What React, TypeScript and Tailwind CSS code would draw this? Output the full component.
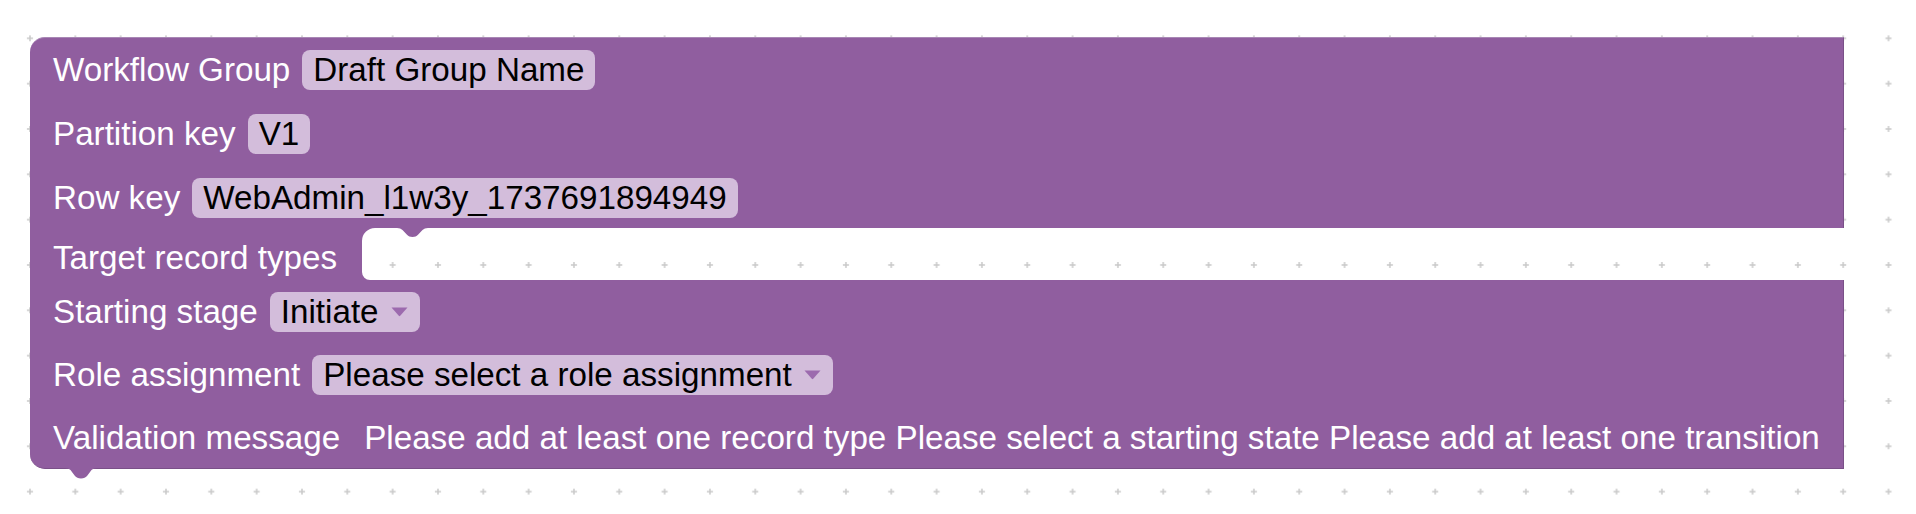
import React from "react";

const PURPLE = "#905e9f";

function Pill({ children, dropdown }: { children: React.ReactNode; dropdown?: boolean }) {
  return (
    <span className="ml-[12px] flex h-[40px] items-center rounded-[8px] bg-[#d3bddb] pl-[11px] pr-[11px] text-black">
      {children}
      {dropdown && (
        <svg width="17" height="10" viewBox="0 0 17 10" className="ml-[12px] mr-[1px]">
          <path d="M0.5 0.5 H16.5 L9.2 8.8 Q8.5 9.5 7.8 8.8 Z" fill="#9c6aae" />
        </svg>
      )}
    </span>
  );
}

function Row({ label, children }: { label: string; children?: React.ReactNode }) {
  return (
    <div className="flex h-[40px] items-center whitespace-nowrap">
      <span className="text-white">{label}</span>
      {children}
    </div>
  );
}

export default function App() {
  return (
    <div className="relative h-[514px] w-full overflow-hidden bg-white font-['Liberation_Sans',Arial,sans-serif] text-[33.2px] leading-none">
      {/* workspace grid */}
      <svg className="absolute inset-0 h-full w-full" aria-hidden>
        <defs>
          <pattern id="grid" x="7.33" y="15.66" width="45.33" height="45.33" patternUnits="userSpaceOnUse">
            <path d="M19.6 22.67 H25.7 M22.67 19.6 V25.7" stroke="#c9c9c9" strokeWidth="1.5" />
          </pattern>
        </defs>
        <rect width="100%" height="100%" fill="url(#grid)" />
      </svg>

      <div className="relative pl-[30px] pt-[37px]">
        <div className="w-[1814px]">
          {/* top section */}
          <div className="flex flex-col gap-[24px] rounded-tl-[15px] border-t border-r border-[#a887b4] border-r-[#7a5088] bg-[#905e9f] pb-[10px] pl-[23px] pt-[12px]">
            <Row label="Workflow Group">
              <Pill>Draft Group Name</Pill>
            </Row>
            <Row label="Partition key">
              <Pill>V1</Pill>
            </Row>
            <Row label="Row key">
              <Pill>WebAdmin_l1w3y_1737691894949</Pill>
            </Row>
          </div>

          {/* statement input */}
          <div className="flex h-[52px]">
            <div className="w-[332px] shrink-0 bg-[#905e9f] pl-[23px] pt-[10px]">
              <Row label="Target record types" />
            </div>
            <div className="relative flex-1">
              <svg className="absolute left-0 top-0" width="70" height="14" viewBox="0 0 70 14">
                <path d="M0 0 H13 A13 13 0 0 0 0 13 Z" fill={PURPLE} />
                <path
                  d="M35 0 C37.5 0 39 0.8 40.5 2 L45 6.8 C46.5 8.2 48 9 50.5 9 C53 9 54.5 8.2 56 6.8 L60.5 2 C62 0.8 63.5 0 66 0 Z"
                  fill={PURPLE}
                />
              </svg>
              <svg className="absolute bottom-0 left-0" width="8" height="8" viewBox="0 0 8 8">
                <path d="M0 0 A8 8 0 0 0 8 8 H0 Z" fill={PURPLE} />
              </svg>
            </div>
          </div>

          {/* bottom section */}
          <div className="relative flex flex-col gap-[23px] rounded-bl-[15px] border-r border-b border-r-[#7a5088] border-b-[#7a5088] bg-[#905e9f] pb-[10px] pl-[23px] pt-[12px]">
            <Row label="Starting stage">
              <Pill dropdown>Initiate</Pill>
            </Row>
            <Row label="Role assignment">
              <Pill dropdown>Please select a role assignment</Pill>
            </Row>
            <Row label="Validation message">
              <span className="ml-[24px] text-white">
                Please add at least one record type Please select a starting state Please add at least one transition
              </span>
            </Row>
            <svg className="absolute left-[35px] top-full" width="32" height="11" viewBox="0 0 32 11">
              <path
                d="M0 0 C2.5 0 4 0.8 5.5 2 L10 8 C11.5 9.6 13 10.5 16 10.5 C19 10.5 20.5 9.6 22 8 L26.5 2 C28 0.8 29.5 0 32 0 Z"
                fill={PURPLE}
              />
            </svg>
          </div>
        </div>
      </div>
    </div>
  );
}
